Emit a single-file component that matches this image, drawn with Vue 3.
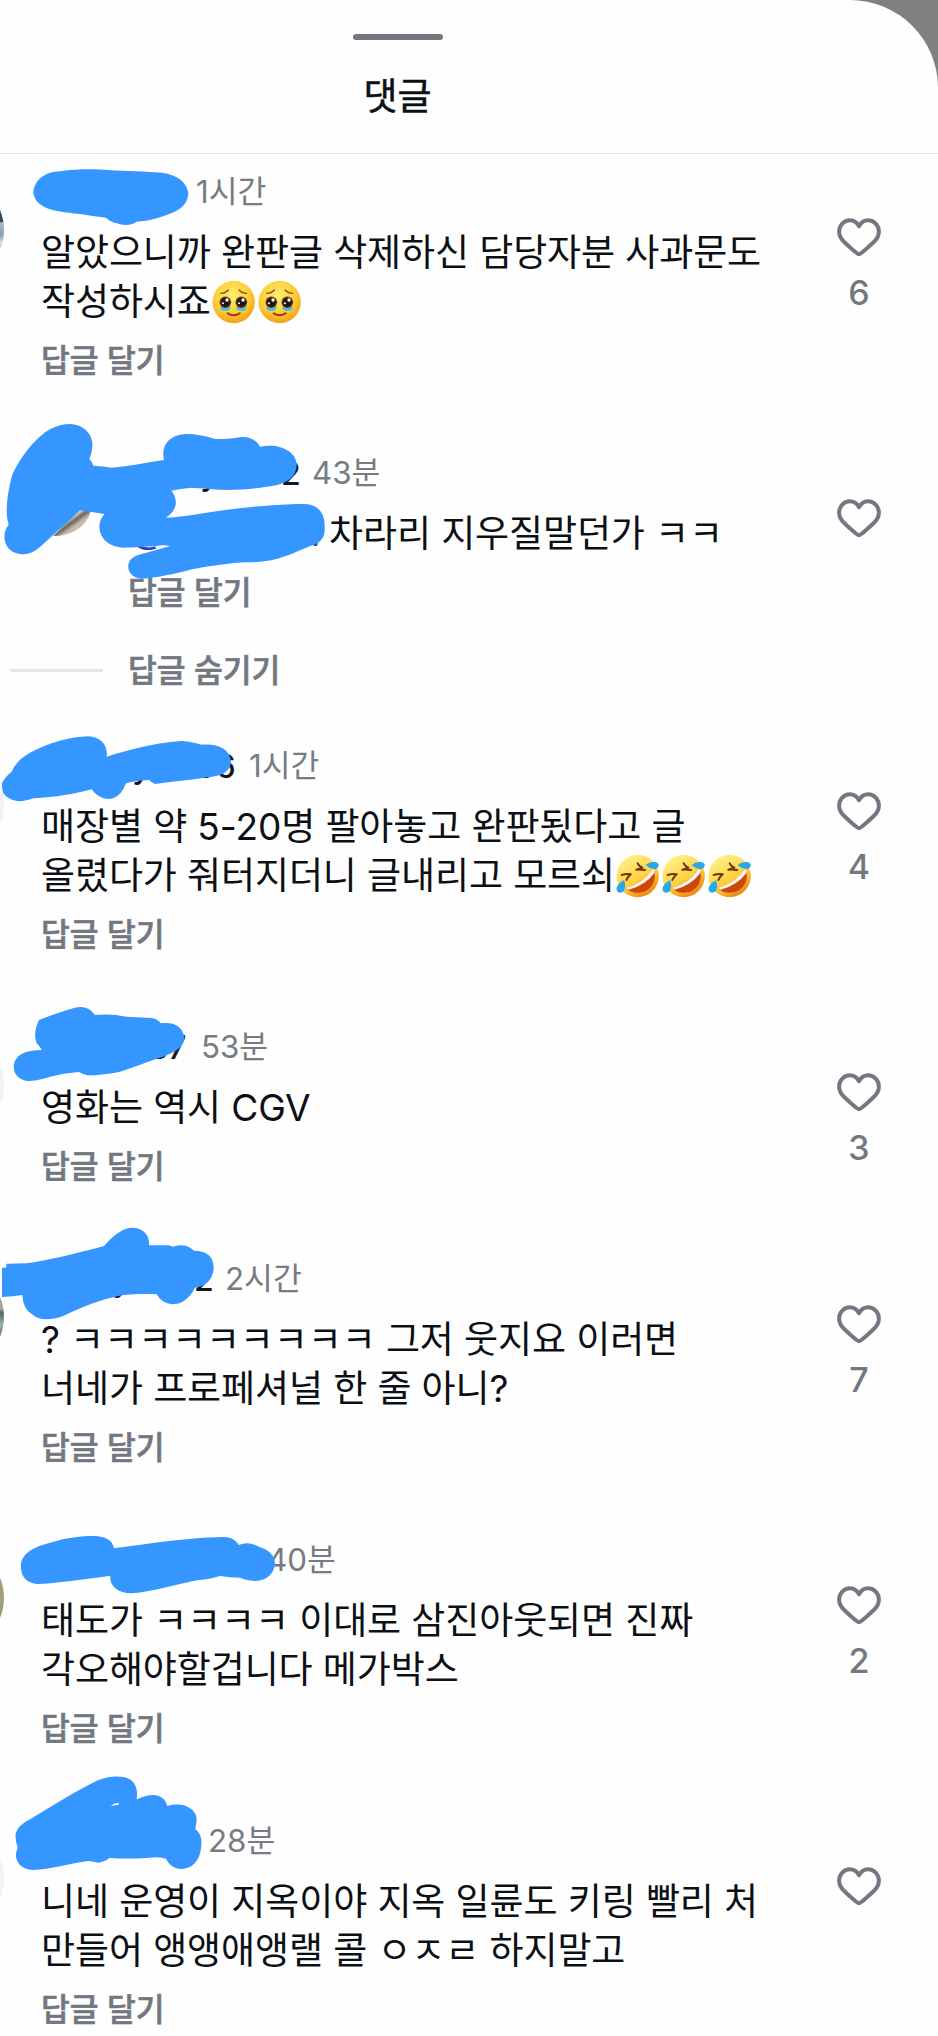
<script setup>
const comments = [
  { time: '1시간', nameWidth: 155, likes: 6, avatar: 'blue', lines: [{ text: '알았으니까 완판글 삭제하신 담당자분 사과문도' }, { text: '작성하시죠', emoji: 'tears', count: 2 }] },
  { time: '43분', nameWidth: 184, nested: true, lines: [{ text: '차라리 지우질말던가 ㅋㅋ', mention: true }] },
  { time: '1시간', nameWidth: 208, likes: 4, avatar: 'pale', lines: [{ text: '매장별 약 5-20명 팔아놓고 완판됬다고 글' }, { text: '올렸다가 줘터지더니 글내리고 모르쇠', emoji: 'rofl', count: 3 }] },
  { time: '53분', nameWidth: 160, likes: 3, avatar: 'pale', lines: [{ text: '영화는 역시 CGV' }] },
  { time: '2시간', nameWidth: 184, likes: 7, avatar: 'street', lines: [{ text: '? ㅋㅋㅋㅋㅋㅋㅋㅋㅋ 그저 웃지요 이러면' }, { text: '너네가 프로페셔널 한 줄 아니?' }] },
  { time: '40분', nameWidth: 226, likes: 2, avatar: 'olive', lines: [{ text: '태도가 ㅋㅋㅋㅋ 이대로 삼진아웃되면 진짜' }, { text: '각오해야할겁니다 메가박스' }] },
  { time: '28분', nameWidth: 167, avatar: 'pale', lines: [{ text: '니네 운영이 지옥이야 지옥 일륜도 키링 빨리 처' }, { text: '만들어 앵앵애앵랠 콜 ㅇㅈㄹ 하지말고' }] },
]

const strokes = [
  { y: 150, d: 'M100 128C104 88 135 66 180 64C230 56 290 57 325 60C380 64 440 64 485 68C535 74 562 100 565 130C563 170 530 185 500 195C465 208 440 213 410 215Q385 232 350 220Q330 215 318 203C290 200 265 196 240 192C195 188 160 184 135 172C112 160 102 145 100 128Z' },
  { y: 410, d: 'M212 42C255 45 280 75 277 110Q276 130 268 146Q274 152 280 167Q310 169 335 173C390 168 440 158 492 150C482 110 505 75 555 72C590 72 620 78 645 87Q680 88 705 84C745 75 770 90 780 110C840 98 890 125 890 165C888 205 855 225 800 230C740 240 680 242 630 237Q590 234 575 233Q540 236 514 242Q530 260 527 285Q522 308 497 323Q530 322 600 311C680 300 740 290 800 287C840 284 880 282 915 282C955 284 975 310 974 350C976 380 965 395 940 405C910 415 890 428 850 440C800 458 760 456 730 457C660 463 600 472 560 482C520 492 470 503 425 506C395 503 383 485 385 465C388 445 405 437 425 432Q470 420 510 408Q490 403 470 408C430 410 400 413 370 413C330 410 300 390 298 350Q299 325 314 312L240 301C200 340 160 375 130 402C100 430 80 436 55 431C25 425 10 400 14 370Q18 352 26 345C15 310 20 260 35 200C60 140 110 80 150 58Q180 42 212 42Z' },
  { y: 720, d: 'M6 190Q15 170 35 155Q50 120 90 98C150 68 210 50 265 49C300 50 325 75 320 110C380 92 450 70 545 63Q580 66 605 74C650 70 690 85 693 125C690 160 660 168 620 172C560 182 510 186 465 192Q455 188 447 180Q400 182 378 190Q365 225 340 235Q300 244 275 208C220 222 170 232 100 235C60 250 30 245 10 220Q5 205 6 190Z' },
  { y: 990, d: 'M117 90Q180 65 225 53Q265 45 285 75Q330 70 380 80L455 84Q475 88 482 100C530 95 550 115 553 145C550 175 520 188 490 200C450 212 400 232 360 245C320 253 290 256 262 256Q245 252 237 246Q190 250 150 260C120 270 100 273 80 273C50 267 38 245 42 222C48 195 75 180 125 180Q120 170 110 160Q98 130 117 90Z' },
  { y: 1220, d: 'M6 143L18 143L20 131L80 130C150 120 230 100 312 78C340 45 370 22 400 23C435 26 450 50 447 76L505 76L520 80Q555 68 582 92C625 92 642 115 641 145C638 185 610 200 585 203C565 240 545 252 515 253Q485 250 470 223C420 220 370 222 340 232C280 245 230 270 190 288C150 302 115 302 95 282Q70 270 67 225Q40 230 6 231Z' },
  { y: 1510, d: 'M63 160C68 130 100 110 150 98C200 82 250 76 290 78C325 82 338 95 342 115C430 105 540 85 650 82C685 78 705 85 716 105Q745 92 780 112Q822 125 825 160C822 200 790 213 765 213Q735 210 720 203Q690 203 660 198Q620 210 595 210C540 220 460 245 395 250C350 250 328 225 331 197C250 208 170 220 110 222C75 217 60 195 63 160Z' },
  { y: 1770, d: 'M47 190Q55 165 90 148C160 105 230 62 290 32C320 20 350 17 375 22C405 30 415 55 410 88Q440 74 465 75Q495 80 502 108C560 92 592 125 590 150L586 178Q606 190 604 222C602 270 580 297 540 297Q510 292 498 266Q470 260 450 263Q390 268 328 264Q315 275 295 278Q280 275 265 273C210 280 150 298 100 300C60 300 45 270 48 250L53 232Q45 215 47 190ZM332 108L357 104Q358 99 350 99Q340 101 332 108Z' },
]

const fragments = [
  { t: 'y', x: 200, y: 485 }, { t: '2', x: 281, y: 485 },
  { t: 'y', x: 132, y: 778 }, { t: '6', x: 195, y: 778 }, { t: '6', x: 215.500, y: 778 },
  { t: '0', x: 149, y: 1059 }, { t: '7', x: 168, y: 1059 },
  { t: 'y', x: 112, y: 1291 }, { t: '2', x: 194, y: 1291 },
  { t: 'y', x: 200, y: 1572 },
]
</script>

<template>
  <div class="screen">
    <svg class="defs" width="0" height="0" aria-hidden="true">
      <defs>
        <radialGradient id="faceGold" cx=".45" cy=".35" r=".68">
          <stop offset="0" stop-color="#ffee72" /><stop offset=".6" stop-color="#fdcf36" /><stop offset="1" stop-color="#f29a16" />
        </radialGradient>
        <linearGradient id="faceWarm" x1=".25" y1=".1" x2=".75" y2=".95">
          <stop offset="0" stop-color="#ffee84" /><stop offset=".55" stop-color="#fcd03e" /><stop offset="1" stop-color="#f08312" />
        </linearGradient>
        <symbol id="tears" viewBox="0 0 138 132">
          <circle cx="68" cy="66" r="63.500" fill="url(#faceGold)" />
          <path d="M29 40Q43 40 52 30M107 40Q93 40 84 30" fill="none" stroke="#8a4f12" stroke-width="4" stroke-linecap="round" />
          <g v-for="x in [43, 91]" :key="x">
            <circle :cx="x" cy="67" r="17.500" fill="#5b3424" />
            <circle :cx="x" cy="67" r="13" fill="#241311" />
            <circle :cx="x + 5" cy="60" r="5" fill="#fff" />
            <circle :cx="x - 7" cy="70" r="3" fill="#fff" />
            <path :d="`M${x - 16} 80Q${x} 88 ${x + 16} 79L${x + 13} 89Q${x} 96 ${x - 13} 89Z`" fill="#43bfe8" />
          </g>
          <path d="M50 100Q68 111 86 100" fill="none" stroke="#a8360f" stroke-width="6" stroke-linecap="round" />
        </symbol>
        <symbol id="rofl" viewBox="0 0 138 132">
          <circle cx="68" cy="66" r="63.500" fill="url(#faceWarm)" />
          <path d="M33 101Q85 88 115 43C127 74 113 102 90 112C66 121 44 115 33 101Z" fill="#c9480c" />
          <path d="M33 101Q85 88 115 43Q119 50 118 57Q90 95 41 107Q37 105 33 101Z" fill="#fff4e6" />
          <path d="M68 28Q72 37 82 41Q74 44 64 47Q76 46 90 48M20 63Q34 59 47 61Q38 67 34 78" fill="none" stroke="#6b3510" stroke-width="6" stroke-linejoin="round" stroke-linecap="round" />
          <path d="M92 33Q104 22 120 24Q132 26 131 35Q129 45 116 45Q103 44 92 33Z" fill="#28a8ea" />
          <path d="M27 79Q34 97 27 110Q20 119 10 115Q2 110 6 98Q12 86 27 79Z" fill="#28a8ea" />
        </symbol>
        <linearGradient id="avatarScene" x1="0" y1="0" x2="1" y2="1">
          <stop offset="0" stop-color="#e6e7ea" /><stop offset=".4" stop-color="#d8d4cc" /><stop offset=".5" stop-color="#6f655a" /><stop offset=".62" stop-color="#c9c1af" /><stop offset="1" stop-color="#a79e8b" />
        </linearGradient>
      </defs>
    </svg>

    <main class="sheet">
      <header class="header">
        <span class="handle"></span>
        <h1 class="title">댓글</h1>
      </header>

      <template v-for="(c, i) in comments" :key="i">
        <article class="comment" :class="{ nested: c.nested }">
          <span v-if="c.avatar" class="avatar" :class="c.avatar"></span>
          <div class="content">
            <div class="meta">
              <span class="name" :style="{ width: c.nameWidth + 'px' }"></span>
              <span class="time">{{ c.time }}</span>
            </div>
            <div class="body">
              <p v-for="(l, j) in c.lines" :key="j" class="line">
                <span v-if="l.mention" class="mention"></span>
                <span>{{ l.text }}</span>
                <svg v-for="n in l.count || 0" :key="n" class="emoji"><use :href="'#' + l.emoji" /></svg>
              </p>
            </div>
            <button class="reply">답글 달기</button>
          </div>
          <div class="likes">
            <svg class="heart" viewBox="0 0 44 39">
              <path d="M22 36.300C20.200 36.300 13 29.500 7.500 24.300C4 21 2.100 18 2.100 13.700C2.100 7.300 7 2.300 12.800 2.300C17 2.300 20 4.500 22 8.200C24 4.500 27 2.300 31.200 2.300C37 2.300 41.900 7.300 41.900 13.700C41.900 18 40 21 36.500 24.300C31 29.500 23.800 36.300 22 36.300Z" />
            </svg>
            <span v-if="c.likes" class="count">{{ c.likes }}</span>
          </div>
        </article>
        <div v-if="c.nested" class="collapse">
          <span class="rule"></span>
          <button class="reply">답글 숨기기</button>
        </div>
      </template>
    </main>

    <svg class="scribbles" viewBox="0 0 938 2036">
      <g transform="translate(0 410) scale(.33333)">
        <path d="M272 303Q265 340 225 362Q195 379 160 378L240 296Z" fill="url(#avatarScene)" />
      </g>
      <text v-for="(f, i) in fragments" :key="i" class="fragment" :x="f.x" :y="f.y">{{ f.t }}</text>
      <text class="fragment handle-text" x="130" y="543">@</text>
      <text class="fragment handle-text" x="310" y="546">.</text>
      <path v-for="(s, i) in strokes" :key="'s' + i" class="ink" :d="s.d" :transform="`translate(0 ${s.y}) scale(.33333)`" />
    </svg>
  </div>
</template>

<style>
body { margin: 0; background: #808080; }
</style>

<style scoped>
.screen {
  position: relative;
  width: 938px;
  height: 2036px;
  overflow: hidden;
  background: #808080;
  font-family: Inter, "Noto Sans CJK KR", sans-serif;
  color: #0c0f14;
}
.defs { position: absolute; }
.sheet {
  height: 2036px;
  overflow: hidden;
  background: #fefefe;
  border-top-right-radius: 88px;
}
.header {
  box-sizing: border-box;
  height: 154px;
  padding: 34px 142px 0 0;
  display: flex;
  flex-direction: column;
  align-items: center;
  border-bottom: 1px solid #e6e7e9;
}
.handle { width: 90px; height: 6px; border-radius: 3px; background: #737780; }
.title { margin: 32px 1px 0 0; font-size: 37px; line-height: 50px; font-weight: 400; -webkit-text-stroke: .5px currentColor; }
.comment {
  position: relative;
  display: flex;
  justify-content: space-between;
  padding: 18px 40px 54px 41px;
}
.comment.nested { padding-left: 128px; padding-bottom: 0; }
.avatar {
  position: absolute;
  left: -100.500px;
  top: 24px;
  width: 104px;
  height: 104px;
  border-radius: 50%;
}
.avatar.blue { background: linear-gradient(#34495e 42%, #a9b9c6 43%, #8c9fae 55%, #d8d8d6 62%); }
.avatar.pale { background: #f1f2f4; }
.avatar.street { background: linear-gradient(#a8a49a 42%, #56685a 46%, #9ab4bd 58%, #8b8a84 62%); }
.avatar.olive { background: linear-gradient(#8b8a66, #a7a17d 50%, #85825a); }
.content { display: flex; flex-direction: column; align-items: flex-start; }
.meta { display: flex; height: 40px; line-height: 40px; }
.name { flex: none; }
.time { font-size: 31.300px; color: #777b83; }
.body { margin-top: 16px; }
.line { display: flex; align-items: center; margin: 0; height: 49px; line-height: 49px; font-size: 37px; letter-spacing: -.1px; white-space: pre; }
.mention { width: 201px; }
.emoji { width: 46px; height: 44px; flex: none; }
.reply {
  margin: 15px 0 0;
  padding: 0;
  border: 0;
  background: none;
  height: 40px;
  font: 500 31.300px/40px Inter, "Noto Sans CJK KR", sans-serif;
  color: #737780;
  -webkit-text-stroke: .6px currentColor;
}
.likes { display: flex; flex-direction: column; align-items: center; width: 78px; padding-top: 46px; }
.heart { width: 44px; height: 39px; fill: none; stroke: #737780; stroke-width: 4; stroke-linejoin: round; }
.count { margin-top: 16px; font-size: 34px; line-height: 40px; font-weight: 500; color: #737780; }
.collapse { display: flex; padding: 38px 0 37px 10px; }
.collapse .reply { margin: 0 0 0 25px; }
.rule { width: 93px; height: 3px; margin-top: 18px; background: #e4e6e8; }
.scribbles { position: absolute; inset: 0; width: 938px; height: 2036px; }
.ink { fill: #3596ff; fill-rule: evenodd; }
.fragment { font-size: 32px; font-weight: 500; fill: #14171c; }
.handle-text { fill: #2b3bc4; font-size: 36px; font-weight: 400; }
</style>
